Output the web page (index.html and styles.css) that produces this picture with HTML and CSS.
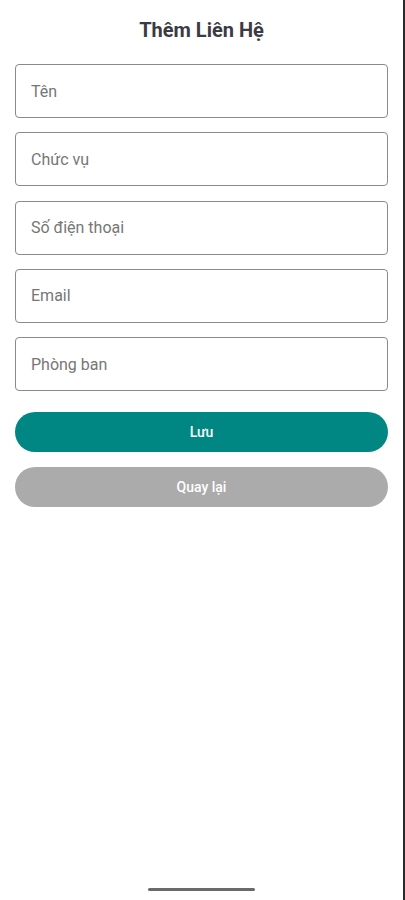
FILE: index.html
```html
<!DOCTYPE html>
<html lang="vi">
<head>
<meta charset="utf-8">
<link rel="stylesheet" href="styles.css">
</head>
<body>
<div class="screen">
  <h1 class="title">Thêm Liên Hệ</h1>
  <form class="form">
    <div class="fields">
      <input class="field" type="text" placeholder="Tên">
      <input class="field" type="text" placeholder="Chức vụ">
      <input class="field" type="text" placeholder="Số điện thoại">
      <input class="field" type="text" placeholder="Email">
      <input class="field" type="text" placeholder="Phòng ban">
    </div>
    <div class="actions">
      <button type="button" class="btn btn-primary">Lưu</button>
      <button type="button" class="btn btn-secondary">Quay lại</button>
    </div>
  </form>
  <div class="home-indicator"></div>
</div>
</body>
</html>
```
FILE: styles.css
```css
* { box-sizing: border-box; }
html, body {
  margin: 0;
  padding: 0;
  width: 405px;
  height: 900px;
  overflow: hidden;
  background: #ffffff;
  font-family: Roboto, "Noto Sans", sans-serif;
}
.screen {
  width: 405px;
  height: 900px;
  padding: 18px 17px 0 15px;
  display: flex;
  flex-direction: column;
  position: relative;
}
.screen::after {
  content: "";
  position: absolute;
  top: 0;
  right: 0;
  width: 2px;
  height: 100%;
  background: #2a2a2a;
}
.title {
  margin: 0;
  font-size: 20px;
  line-height: 24px;
  font-weight: 700;
  color: #3b3b43;
  text-align: center;
}
.form {
  margin-top: 22px;
  display: flex;
  flex-direction: column;
}
.fields {
  display: flex;
  flex-direction: column;
  gap: 14.25px;
}
.field {
  height: 54px;
  width: 100%;
  border: 1px solid #8a8a8a;
  border-radius: 4px;
  padding: 0 15px;
  font-family: Roboto, "Noto Sans", sans-serif;
  font-size: 16px;
  color: #333;
  background: #fff;
  outline: none;
}
.field::placeholder {
  color: #767676;
}
.actions {
  margin-top: 21px;
  display: flex;
  flex-direction: column;
  gap: 15px;
}
.btn {
  height: 40px;
  width: 100%;
  border: none;
  border-radius: 20px;
  color: #ffffff;
  font-family: Roboto, "Noto Sans", sans-serif;
  font-size: 14px;
  font-weight: 500;
}
.btn-primary { background: #008784; }
.btn-secondary { background: #ababab; }
.home-indicator {
  position: absolute;
  left: 148px;
  top: 888px;
  width: 107px;
  height: 3px;
  border-radius: 2px;
  background: #6a6a6a;
}
```
